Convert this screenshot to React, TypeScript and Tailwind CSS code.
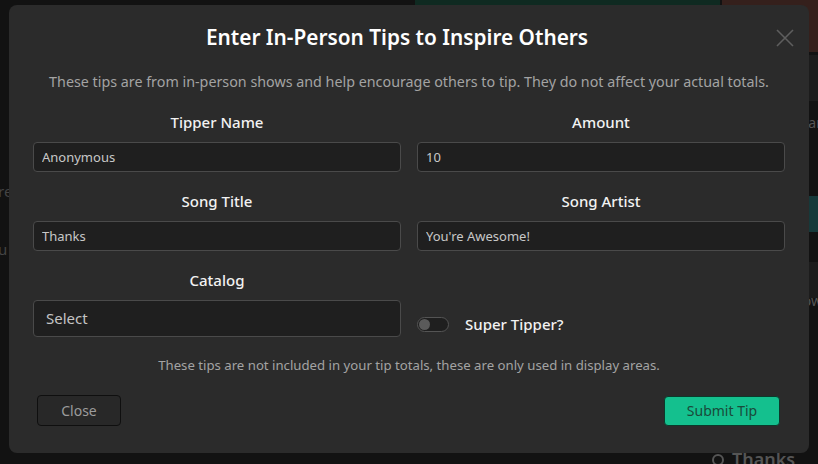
import React, { useState } from "react";

const Field: React.FC<{ label: string; value: string }> = ({ label, value }) => (
  <div className="flex flex-col">
    <label className="text-center text-[15px] leading-5 font-medium text-[#f2f2f2] mb-2.5">
      {label}
    </label>
    <input
      defaultValue={value}
      className="h-[30px] w-full rounded bg-[#1f1f1f] border border-[#4a4a4a] px-2 text-[13px] text-[#c8c8c8] outline-none"
    />
  </div>
);

const Toggle: React.FC<{ on: boolean; onChange: () => void }> = ({ on, onChange }) => (
  <button
    onClick={onChange}
    className="relative h-[15px] w-[32px] rounded-full border border-[#545454] bg-[#1f1f1f]"
    aria-label="Super Tipper"
  >
    <span
      className={`absolute top-[1px] h-[11px] w-[11px] rounded-full bg-[#5a5a5a] ${
        on ? "left-[18px]" : "left-[1px]"
      }`}
    />
  </button>
);

const Backdrop: React.FC = () => (
  <div className="absolute inset-0 bg-[#121212]">
    {/* faint page content behind the overlay */}
    <div className="absolute left-[415px] top-0 h-[6px] w-[305px] bg-[#0f2a21]" />
    <div className="absolute left-[722px] top-0 h-[52px] w-[96px] bg-[#35201c]" />
    <div className="absolute right-0 top-[55px] h-[46px] w-[10px] bg-[#1c1c1c]" />
    <div className="absolute right-0 top-[196px] h-[36px] w-[10px] bg-[#16393a]" />
    <div className="absolute right-0 top-[262px] h-[36px] w-[10px] bg-[#1c1c1c]" />
    <div className="absolute right-[-4px] top-[112px] text-[14px] text-[#555]">ar</div>
    <div className="absolute right-[-4px] top-[290px] text-[14px] text-[#555]">ow</div>
    <div className="absolute left-[-2px] top-[180px] text-[15px] text-[#444]">re</div>
    <div className="absolute left-[-2px] top-[238px] text-[15px] text-[#444]">u</div>
    <div className="absolute left-[712px] top-[446px] flex items-center gap-2 text-[18px] font-semibold text-[#555]">
      <span className="h-[12px] w-[12px] rounded-full border-2 border-[#555]" />
      Thanks
    </div>
  </div>
);

export default function App() {
  const [superTipper, setSuperTipper] = useState(false);

  return (
    <div className="relative h-screen w-screen overflow-hidden font-['Noto_Sans',sans-serif]">
      <Backdrop />

      <div className="fixed left-[9px] top-[5px] w-[800px] rounded-lg bg-[#2b2b2b] px-6 pt-4 pb-[27px]">
        {/* Header */}
        <h2 className="pr-6 text-center text-[20.8px] leading-8 font-semibold text-white">
          Enter In-Person Tips to Inspire Others
        </h2>
        <button
          className="absolute right-[15px] top-[24px] flex h-[18px] w-[18px] items-center justify-center text-[#5e5e5e]"
          aria-label="Close"
        >
          <svg width="18" height="18" viewBox="0 0 18 18" fill="none" stroke="currentColor" strokeWidth="1.6">
            <path d="M1 1 L17 17 M17 1 L1 17" />
          </svg>
        </button>

        <p className="mt-[19px] text-center text-[14.3px] leading-5 text-[#a3a3a3]">
          These tips are from in-person shows and help encourage others to tip. They do not affect your actual totals.
        </p>

        {/* Form */}
        <div className="mt-5 grid grid-cols-2 gap-x-4 gap-y-[19px]">
          <Field label="Tipper Name" value="Anonymous" />
          <Field label="Amount" value="10" />
          <Field label="Song Title" value="Thanks" />
          <Field label="Song Artist" value="You're Awesome!" />

          <div className="flex flex-col">
            <label className="text-center text-[15px] leading-5 font-medium text-[#f2f2f2] mb-2.5">
              Catalog
            </label>
            <select className="h-[37px] w-full appearance-none rounded bg-[#1f1f1f] border border-[#4a4a4a] px-3 text-[15px] text-[#c4c4c4] outline-none">
              <option>Select</option>
            </select>
          </div>
          <div className="flex h-[26px] items-center gap-4 self-end">
            <Toggle on={superTipper} onChange={() => setSuperTipper(!superTipper)} />
            <span className="text-[15px] font-medium text-[#f2f2f2]">Super Tipper?</span>
          </div>
        </div>

        <p className="mt-[19px] text-center text-[13.2px] leading-[18px] text-[#a3a3a3]">
          These tips are not included in your tip totals, these are only used in display areas.
        </p>

        {/* Footer */}
        <div className="mt-[21px] flex items-center justify-between pl-1 pr-[5px]">
          <button className="h-[31px] w-[84px] rounded border border-[#0f0f0f] bg-[#282828] text-[14px] text-[#9c9c9c]">
            Close
          </button>
          <button className="h-[30px] w-[116px] rounded border border-[#0b3a2b] bg-[#14c08e] text-[14px] text-[#1a4a3a]">
            Submit Tip
          </button>
        </div>
      </div>
    </div>
  );
}
